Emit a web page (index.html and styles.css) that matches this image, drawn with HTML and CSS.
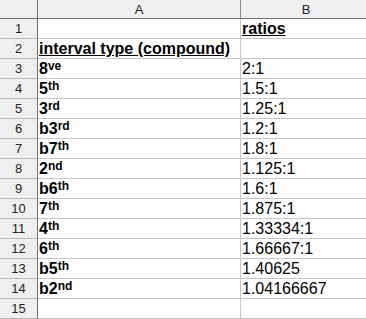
FILE: index.html
```html
<!DOCTYPE html>
<html>
<head>
<meta charset="utf-8">
<link rel="stylesheet" href="styles.css">
</head>
<body>
<div class="sheet">
  <div class="corner"></div>
  <div class="colhead">A</div>
  <div class="colhead last">B</div>

  <div class="rowhead">1</div>
  <div class="cell"></div>
  <div class="cell last"><span class="title">ratios</span></div>

  <div class="rowhead">2</div>
  <div class="cell"><span class="title">interval type (compound)</span></div>
  <div class="cell last"></div>

  <div class="rowhead">3</div>
  <div class="cell interval">8<sup>ve</sup></div>
  <div class="cell last">2:1</div>

  <div class="rowhead">4</div>
  <div class="cell interval">5<sup>th</sup></div>
  <div class="cell last">1.5:1</div>

  <div class="rowhead">5</div>
  <div class="cell interval">3<sup>rd</sup></div>
  <div class="cell last">1.25:1</div>

  <div class="rowhead">6</div>
  <div class="cell interval">b3<sup>rd</sup></div>
  <div class="cell last">1.2:1</div>

  <div class="rowhead">7</div>
  <div class="cell interval">b7<sup>th</sup></div>
  <div class="cell last">1.8:1</div>

  <div class="rowhead">8</div>
  <div class="cell interval">2<sup>nd</sup></div>
  <div class="cell last">1.125:1</div>

  <div class="rowhead">9</div>
  <div class="cell interval">b6<sup>th</sup></div>
  <div class="cell last">1.6:1</div>

  <div class="rowhead">10</div>
  <div class="cell interval">7<sup>th</sup></div>
  <div class="cell last">1.875:1</div>

  <div class="rowhead">11</div>
  <div class="cell interval">4<sup>th</sup></div>
  <div class="cell last">1.33334:1</div>

  <div class="rowhead">12</div>
  <div class="cell interval">6<sup>th</sup></div>
  <div class="cell last">1.66667:1</div>

  <div class="rowhead">13</div>
  <div class="cell interval">b5<sup>th</sup></div>
  <div class="cell last">1.40625</div>

  <div class="rowhead">14</div>
  <div class="cell interval">b2<sup>nd</sup></div>
  <div class="cell last">1.04166667</div>

  <div class="rowhead">15</div>
  <div class="cell"></div>
  <div class="cell last"></div>
</div>
</body>
</html>
```

FILE: styles.css
```css
html, body {
  margin: 0;
  padding: 0;
  background: #ffffff;
  overflow: hidden;
}

.sheet {
  display: grid;
  grid-template-columns: 38px 203px 130px;
  grid-template-rows: 19px;
  grid-auto-rows: 20px;
  font-family: "Liberation Sans", Arial, sans-serif;
  color: #000;
}

.sheet > div {
  box-sizing: border-box;
  border-right: 1px solid #c6c6c6;
  border-bottom: 1px solid #c6c6c6;
  overflow: visible;
  white-space: nowrap;
}

.sheet > .last {
  border-right: none;
}

.corner {
  background: #efefef;
  border-right-color: #707070 !important;
  border-bottom-color: #707070 !important;
}

.colhead {
  background: #efefef;
  border-right-color: #8a8a8a !important;
  border-bottom-color: #707070 !important;
  font-size: 13px;
  line-height: 20px;
  text-align: center;
  color: #222;
}

.rowhead {
  background: #efefef;
  border-right-color: #707070 !important;
  border-bottom-color: #b8b8b8 !important;
  font-size: 13px;
  line-height: 20px;
  text-align: center;
  color: #222;
}

.cell {
  font-size: 16px;
  line-height: 19px;
  padding-left: 1px;
}

.title {
  font-weight: bold;
  text-decoration: underline;
  text-underline-offset: 1px;
}

.interval {
  font-weight: bold;
}

.interval sup {
  font-size: 12px;
  line-height: 1;
  vertical-align: 4px;
}
```
